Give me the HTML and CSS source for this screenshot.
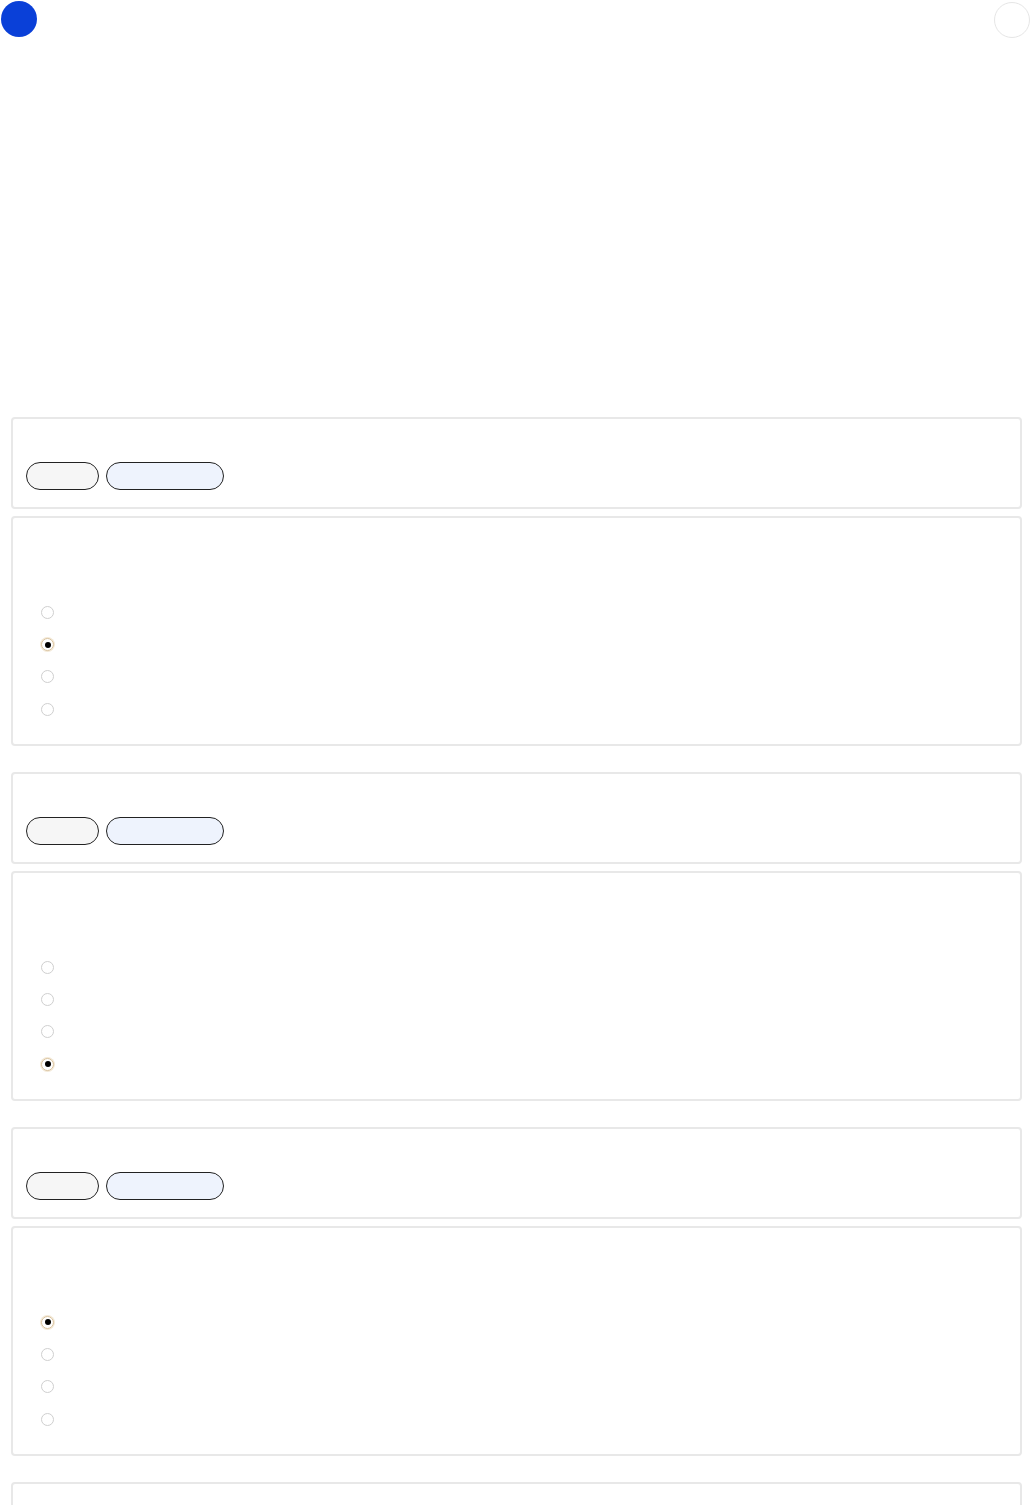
FILE: index.html
```html
<!DOCTYPE html>
<html lang="en">
<head>
    <meta charset="UTF-8">
    <meta name="viewport" content="width=device-width, initial-scale=1.0">
    <title>Quiz</title>
    <link rel="stylesheet" href="styles.css">
</head>
<body>
    <div class="barra">
        <span class="logo"></span>
        <span class="perfil"></span>
    </div>

    <div class="lista">
        <div class="grupo">
            <div class="tarjeta cabeza">
                <div class="titulo"></div>
                <div class="etiquetas">
                    <span class="chip gris"></span>
                    <span class="chip azul"></span>
                </div>
            </div>
            <div class="tarjeta cuerpo">
                <div class="pregunta"></div>
                <div class="opcion"><span class="radio"></span></div>
                <div class="opcion"><span class="radio marcado"></span></div>
                <div class="opcion"><span class="radio"></span></div>
                <div class="opcion"><span class="radio"></span></div>
            </div>
        </div>

        <div class="grupo">
            <div class="tarjeta cabeza">
                <div class="titulo"></div>
                <div class="etiquetas">
                    <span class="chip gris"></span>
                    <span class="chip azul"></span>
                </div>
            </div>
            <div class="tarjeta cuerpo">
                <div class="pregunta"></div>
                <div class="opcion"><span class="radio"></span></div>
                <div class="opcion"><span class="radio"></span></div>
                <div class="opcion"><span class="radio"></span></div>
                <div class="opcion"><span class="radio marcado"></span></div>
            </div>
        </div>

        <div class="grupo">
            <div class="tarjeta cabeza">
                <div class="titulo"></div>
                <div class="etiquetas">
                    <span class="chip gris"></span>
                    <span class="chip azul"></span>
                </div>
            </div>
            <div class="tarjeta cuerpo">
                <div class="pregunta"></div>
                <div class="opcion"><span class="radio marcado"></span></div>
                <div class="opcion"><span class="radio"></span></div>
                <div class="opcion"><span class="radio"></span></div>
                <div class="opcion"><span class="radio"></span></div>
            </div>
        </div>

        <div class="grupo">
            <div class="tarjeta cabeza">
                <div class="titulo"></div>
                <div class="etiquetas">
                    <span class="chip gris"></span>
                    <span class="chip azul"></span>
                </div>
            </div>
        </div>
    </div>
</body>
</html>
```

FILE: styles.css
```css
body {
    margin: 0;
    background-color: #fff;
    font-family: "Liberation Sans", Arial, sans-serif;
}

.barra {
    display: flex;
    justify-content: space-between;
    align-items: flex-start;
    padding: 1px 1px 0 1px;
    height: 417px;
    box-sizing: border-box;
}

.logo {
    width: 36px;
    height: 36px;
    border-radius: 50%;
    background-color: #0a40d8;
}

.perfil {
    width: 34px;
    height: 34px;
    margin-top: 1px;
    border: 1px solid #e6e6e6;
    border-radius: 50%;
    background-color: #fff;
}

.lista {
    padding: 0 9px 0 11px;
}

.grupo {
    display: flex;
    flex-direction: column;
    gap: 7px;
    margin-bottom: 26px;
}

.tarjeta {
    border: 2px solid #e8e8e8;
    border-radius: 4px;
    background-color: #fff;
}

.cabeza {
    height: 92px;
    box-sizing: border-box;
    padding: 0 13px;
}

.titulo {
    height: 43px;
}

.etiquetas {
    display: flex;
    gap: 7px;
}

.chip {
    height: 28px;
    box-sizing: border-box;
    border: 1px solid #222;
    border-radius: 14px;
}

.gris {
    width: 73px;
    background-color: #f6f6f6;
}

.azul {
    width: 118px;
    background-color: #eef3fd;
}

.cuerpo {
    height: 230px;
    box-sizing: border-box;
    padding: 0 28px 0 28px;
}

.pregunta {
    height: 78px;
}

.opcion {
    height: 32.4px;
    display: flex;
    align-items: center;
}

.radio {
    width: 11px;
    height: 11px;
    border: 1px solid #cfcfcf;
    border-radius: 50%;
    position: relative;
}

.radio.marcado {
    border-color: #d8c09a;
    box-shadow: 0 0 0 1px #f3e9d6;
}

.radio.marcado::after {
    content: "";
    position: absolute;
    left: 2.5px;
    top: 2.5px;
    width: 6px;
    height: 6px;
    border-radius: 50%;
    background-color: #000;
}
```
